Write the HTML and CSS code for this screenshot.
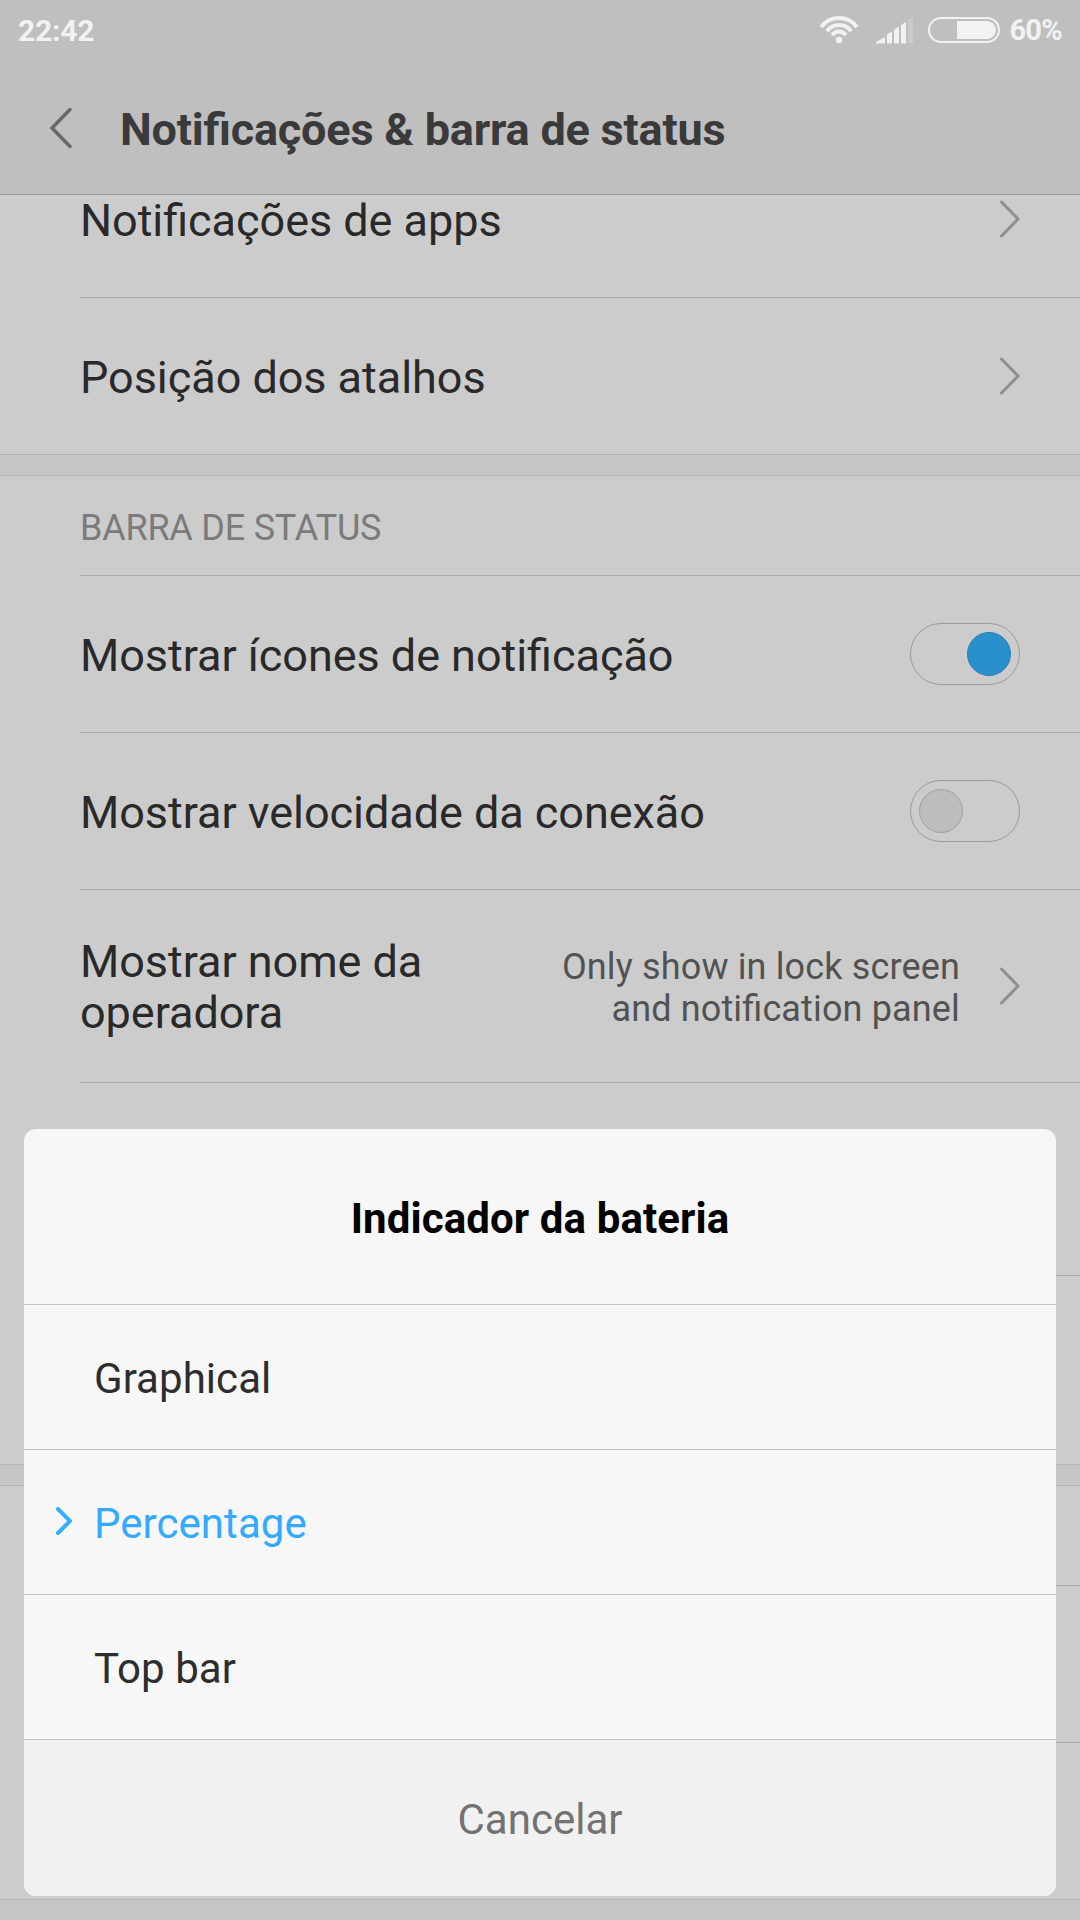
FILE: index.html
```
<!DOCTYPE html>
<html lang="pt-br">

<head>
    <title>Notificações &amp; barra de status</title>
    <meta charset="utf-8">
    <link rel="stylesheet" href="styles.css">
</head>

<body>
    <header class="topo">
        <div class="status">
            <span class="hora">22:42</span>
            <div class="status-icones">
                <svg class="wifi" width="40" height="28" viewBox="0 0 40 28">
                    <path d="M2.2 11.1A22 22 0 0 1 37.8 11.1" />
                    <path d="M7.9 15.2A15 15 0 0 1 32.1 15.2" />
                    <path d="M13.1 19A8.5 8.5 0 0 1 26.9 19" />
                    <circle cx="20" cy="24" r="3.2" />
                </svg>
                <svg class="sinal" width="38" height="26" viewBox="0 0 38 26">
                    <path d="M0 25.5V24L9 19V25.5Z" />
                    <path d="M11 25.5V16.5L16 13.5V25.5Z" />
                    <path d="M18 25.5V11.5L23 8.5V25.5Z" />
                    <path d="M25 25.5V7L30 4V25.5Z" />
                    <path class="fraco" d="M32 25.5V2.5L37 0V25.5Z" />
                </svg>
                <div class="bateria"><div class="carga"></div></div>
                <span class="porcento">60%</span>
            </div>
        </div>
        <div class="titulo">
            <svg class="voltar" width="24" height="42" viewBox="0 0 24 42">
                <path d="M21 2.5L3 21L21 39.5" />
            </svg>
            <h1>Notificações &amp; barra de status</h1>
        </div>
    </header>

    <main class="lista">
        <div class="linha">
            <span class="nome">Notificações de apps</span>
            <svg class="seta" width="20" height="38" viewBox="0 0 20 38"><path d="M1.5 2L18 19L1.5 36" /></svg>
        </div>
        <div class="linha ultima">
            <span class="nome">Posição dos atalhos</span>
            <svg class="seta" width="20" height="38" viewBox="0 0 20 38"><path d="M1.5 2L18 19L1.5 36" /></svg>
        </div>
        <div class="espaco"></div>
        <h2 class="grupo">BARRA DE STATUS</h2>
        <div class="linha">
            <span class="nome">Mostrar ícones de notificação</span>
            <div class="chave ligada"><div class="bola"></div></div>
        </div>
        <div class="linha">
            <span class="nome">Mostrar velocidade da conexão</span>
            <div class="chave"><div class="bola"></div></div>
        </div>
        <div class="linha alta">
            <span class="nome curto">Mostrar nome da operadora</span>
            <span class="valor">Only show in lock screen and notification panel</span>
            <svg class="seta" width="20" height="38" viewBox="0 0 20 38"><path d="M1.5 2L18 19L1.5 36" /></svg>
        </div>
        <!-- linhas cobertas pela janela -->
        <div class="linha alta"></div>
        <div class="linha alta ultima"></div>
        <div class="espaco"></div>
        <h2 class="grupo"></h2>
        <div class="linha"></div>
        <div class="linha ultima"></div>
        <div class="espaco"></div>
    </main>

    <div class="janela">
        <h2 class="janela-titulo">Indicador da bateria</h2>
        <div class="opcao">Graphical</div>
        <div class="opcao marcada">
            <svg class="marca" width="16" height="28" viewBox="0 0 16 28"><path d="M2 2L14 14L2 26" /></svg>
            Percentage
        </div>
        <div class="opcao">Top bar</div>
        <button class="cancelar">Cancelar</button>
    </div>
</body>

</html>
```

FILE: styles.css
```
* {
    box-sizing: border-box;
}

body {
    margin: 0;
    height: 1920px;
    position: relative;
    overflow: hidden;
    background-color: #cccccc;
    font-family: Roboto, "Liberation Sans", sans-serif;
    font-feature-settings: "liga" 1;
    color: #292929;
}

h1,
h2 {
    margin: 0;
}

svg {
    display: block;
    flex: none;
}

/* topo */
.topo {
    height: 195px;
    background-color: #bfbfbf;
    border-bottom: 1px solid #9d9d9d;
}

.status {
    height: 60px;
    padding: 0 18px;
    display: flex;
    align-items: center;
    justify-content: space-between;
    font-size: 30px;
    font-weight: bold;
    letter-spacing: -0.2px;
    color: #f2f2f2;
}

.status-icones {
    display: flex;
    align-items: center;
}

.wifi {
    fill: none;
    stroke: #f2f2f2;
    stroke-width: 4;
}

.wifi circle {
    fill: #f2f2f2;
    stroke: none;
}

.sinal {
    margin: 1px 14px 0 17px;
    fill: #f2f2f2;
}

.sinal .fraco {
    fill: #cbcbcb;
}

.bateria {
    width: 72px;
    height: 26px;
    padding: 2px;
    border: 2px solid #f2f2f2;
    border-radius: 13px;
    display: flex;
    justify-content: flex-end;
}

.carga {
    width: 39px;
    background-color: #f2f2f2;
    border-radius: 0 9px 9px 0;
}

.porcento {
    margin-left: 9px;
    font-size: 29px;
    letter-spacing: -0.7px;
}

.titulo {
    height: 134px;
    padding-left: 49px;
    display: flex;
    align-items: center;
}

.titulo h1 {
    margin-left: 47px;
    padding-top: 5px;
    font-size: 45px;
    letter-spacing: -0.2px;
    color: #3a3a3a;
}

.voltar {
    margin-top: 2px;
    fill: none;
    stroke: #686868;
    stroke-width: 3.5;
    stroke-linecap: round;
}

/* lista rolada por baixo do topo */
.lista {
    height: 1725px;
    overflow: hidden;
    display: flex;
    flex-direction: column;
}

.linha {
    flex: none;
    height: 157px;
    margin-left: 80px;
    padding-right: 60px;
    border-bottom: 1px solid #ababab;
    display: flex;
    align-items: center;
    justify-content: space-between;
}

.linha:first-child {
    margin-top: -54px;
}

.linha.alta {
    height: 193px;
}

.linha.ultima {
    height: 156px;
    border-bottom: none;
}

.linha.alta.ultima {
    height: 188px;
}

.nome {
    padding-top: 3px;
    font-size: 45px;
    line-height: 51px;
    letter-spacing: -0.05px;
}

.curto {
    width: 380px;
    padding-top: 1px;
}

.valor {
    width: 420px;
    margin-left: auto;
    margin-right: 40px;
    padding-top: 3px;
    font-size: 36px;
    line-height: 42px;
    letter-spacing: 0.15px;
    text-align: right;
    color: #525252;
}

.seta {
    margin-top: -1px;
    fill: none;
    stroke: #8f8f8f;
    stroke-width: 3;
    stroke-linecap: round;
}

.espaco {
    flex: none;
    height: 22px;
    background-color: #c5c5c5;
    border-top: 1px solid #b4b4b4;
    border-bottom: 1px solid #b4b4b4;
}

.grupo {
    flex: none;
    height: 100px;
    margin-left: 80px;
    padding-top: 5px;
    border-bottom: 1px solid #ababab;
    font-size: 36px;
    font-weight: normal;
    line-height: 94px;
    letter-spacing: -0.23px;
    color: #7b7b7b;
}

.chave {
    width: 110px;
    height: 62px;
    padding: 8px;
    border: 1px solid #9b9b9b;
    border-radius: 31px;
    display: flex;
}

.bola {
    width: 44px;
    height: 44px;
    border: 1px solid #a0a0a0;
    border-radius: 50%;
    background-color: #bdbdbd;
}

.ligada {
    justify-content: flex-end;
}

.ligada .bola {
    border-color: #2a7fb8;
    background-color: #2a90cd;
}

/* janela de escolha */
.janela {
    position: absolute;
    left: 24px;
    right: 24px;
    bottom: 24px;
    height: 767px;
    border-radius: 12px;
    overflow: hidden;
    background-color: #f7f7f7;
}

.janela-titulo {
    height: 176px;
    padding-top: 4px;
    border-bottom: 1px solid #c4c4c4;
    font-size: 42px;
    line-height: 172px;
    letter-spacing: 0.1px;
    text-align: center;
    color: #000;
}

.opcao {
    height: 145px;
    padding: 2px 0 0 70px;
    border-bottom: 1px solid #c4c4c4;
    display: flex;
    align-items: center;
    font-size: 42px;
    letter-spacing: 0.05px;
    color: #2d2d2d;
}

.marcada {
    padding-left: 32px;
    color: #33aaff;
}

.marca {
    margin: -4px 22px 0 0;
    fill: none;
    stroke: #33b0ff;
    stroke-width: 4;
    stroke-linecap: round;
}

.cancelar {
    display: block;
    width: 100%;
    height: 156px;
    padding: 2px 0 0;
    border: none;
    background-color: #f1f1f1;
    font-family: inherit;
    font-size: 42px;
    color: #727272;
}
```
